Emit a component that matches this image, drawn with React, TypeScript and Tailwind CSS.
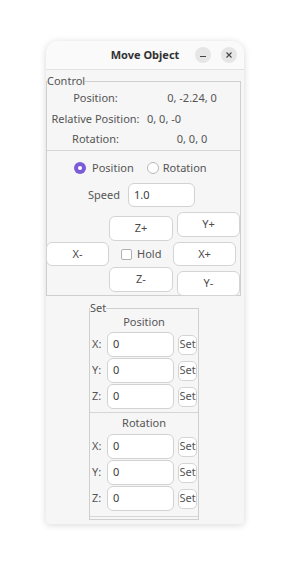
import React from "react";

const font = { fontFamily: '"Noto Sans", "Open Sans", sans-serif' };

function Btn({ label, className }: { label: string; className: string }) {
  return (
    <div
      className={
        "flex items-center justify-center bg-white border border-[#d4d4d4] rounded-[6px] text-[11px] text-[#4a4a4a] " +
        className
      }
    >
      {label}
    </div>
  );
}

function Entry({ value, className }: { value: string; className: string }) {
  return (
    <div
      className={
        "flex items-center bg-white border border-[#d2d2d2] rounded-[6px] pl-[5px] text-[11px] text-[#3a3a3a] " +
        className
      }
    >
      {value}
    </div>
  );
}

function SetRow({ label }: { label: string }) {
  return (
    <div className="flex items-center h-[25px]">
      <div className="w-[16px] pl-[2px] text-[11px] text-[#555]">{label}</div>
      <Entry value="0" className="w-[67px] h-[25px] ml-[1px]" />
      <div className="ml-[4px] w-[19px] h-[20px] bg-white border border-[#d4d4d4] rounded-[5px] overflow-hidden flex items-center justify-center text-[11px] text-[#555]">
        <span className="whitespace-nowrap">Set</span>
      </div>
    </div>
  );
}

export default function App() {
  return (
    <div className="w-[290px] h-[574px] bg-white pt-[41px] pl-[46px]" style={font}>
      <div className="w-[198px] h-[483px] rounded-t-[12px] rounded-b-[3px] bg-[#f6f6f6] shadow-[0_1px_7px_rgba(0,0,0,0.16)] flex flex-col">
        {/* header */}
        <div className="h-[29px] bg-[#fafafa] rounded-t-[12px] border-b border-[#e2e2e2] flex items-center shrink-0">
          <div className="w-[49px]" />
          <div className="flex-1 text-center text-[11px] font-bold text-[#333]">Move Object</div>
          <div className="w-[49px] flex items-center gap-[10px]">
            <div className="w-[16px] h-[16px] rounded-full bg-[#e6e6e6] flex items-center justify-center">
              <div className="w-[6px] h-[1px] bg-[#444] mt-[3px]" />
            </div>
            <div className="w-[16px] h-[16px] rounded-full bg-[#e6e6e6] flex items-center justify-center">
              <svg width="8" height="8" viewBox="0 0 8 8">
                <path d="M1.5 1.5 L6.5 6.5 M6.5 1.5 L1.5 6.5" stroke="#444" strokeWidth="1.1" />
              </svg>
            </div>
          </div>
        </div>

        {/* body */}
        <div className="flex flex-col">
          <fieldset className="mt-[4px] w-[194px] h-[222px] border border-[#cfcfcf] text-[11px] text-[#555]">
            <legend className="leading-[14px] text-[#555] text-[11px]">Control</legend>
            <div className="flex h-[21px] items-center">
              <div className="w-[97px] text-center">Position:</div>
              <div className="flex-1 text-center">0, -2.24, 0</div>
            </div>
            <div className="flex h-[20px] items-center">
              <div className="w-[97px] text-center whitespace-nowrap">Relative Position:</div>
              <div className="flex-1 pl-[3px]">0, 0, -0</div>
            </div>
            <div className="flex h-[21px] items-center">
              <div className="w-[97px] text-center">Rotation:</div>
              <div className="flex-1 text-center">0, 0, 0</div>
            </div>
            <div className="border-t border-[#d6d6d6]" />
            {/* radios */}
            <div className="flex items-center h-[16px] mt-[9px] pl-[27px]">
              <div className="w-[12px] h-[12px] rounded-full bg-[#7a5cd6] flex items-center justify-center">
                <div className="w-[4px] h-[4px] rounded-full bg-white" />
              </div>
              <span className="ml-[6px] text-[#555]">Position</span>
              <div className="ml-[13px] w-[12px] h-[12px] rounded-full bg-white border border-[#b8b8b8]" />
              <span className="ml-[4px] text-[#555]">Rotation</span>
            </div>
            {/* speed */}
            <div className="flex items-center h-[24px] mt-[7px]">
              <div className="w-[81px] text-right pr-[8px]">Speed</div>
              <Entry value="1.0" className="w-[67px] h-[24px]" />
            </div>
            {/* buttons */}
            <div className="flex mt-[5px]">
              <div className="w-[62px] flex flex-col">
                <Btn label="X-" className="mt-[30px] -ml-[1px] h-[24px] w-[63px]" />
              </div>
              <div className="w-[64px] flex flex-col">
                <Btn label="Z+" className="mt-[4px] h-[25px] w-[64px]" />
                <div className="h-[26px] flex items-center pl-[12px]">
                  <div className="w-[11px] h-[11px] bg-white border border-[#b0b0b0] rounded-[2px]" />
                  <span className="ml-[5px]">Hold</span>
                </div>
                <Btn label="Z-" className="h-[25px] w-[64px]" />
              </div>
              <div className="w-[67px] flex flex-col">
                <Btn label="Y+" className="ml-[4px] h-[25px] w-[63px]" />
                <Btn label="X+" className="mt-[5px] h-[24px] w-[63px]" />
                <Btn label="Y-" className="ml-[4px] mt-[5px] h-[25px] w-[63px]" />
              </div>
            </div>
          </fieldset>

          <fieldset className="mt-[5px] ml-[43px] w-[110px] h-[219px] border border-[#cfcfcf] text-[11px] text-[#555]">
            <legend className="leading-[14px] text-[11px]">Set</legend>
            <div className="text-center h-[14px] leading-[14px] mt-[0px]">Position</div>
            <div className="mt-[3px] flex flex-col gap-[1px]">
              <SetRow label="X:" />
              <SetRow label="Y:" />
              <SetRow label="Z:" />
            </div>
            <div className="mt-[3px] border-t border-[#d6d6d6]" />
            <div className="text-center h-[14px] leading-[14px] mt-[3px]">Rotation</div>
            <div className="mt-[4px] flex flex-col gap-[1px]">
              <SetRow label="X:" />
              <SetRow label="Y:" />
              <SetRow label="Z:" />
            </div>
            <div className="mt-[5px] border-t border-[#d6d6d6]" />
          </fieldset>
        </div>
      </div>
    </div>
  );
}
